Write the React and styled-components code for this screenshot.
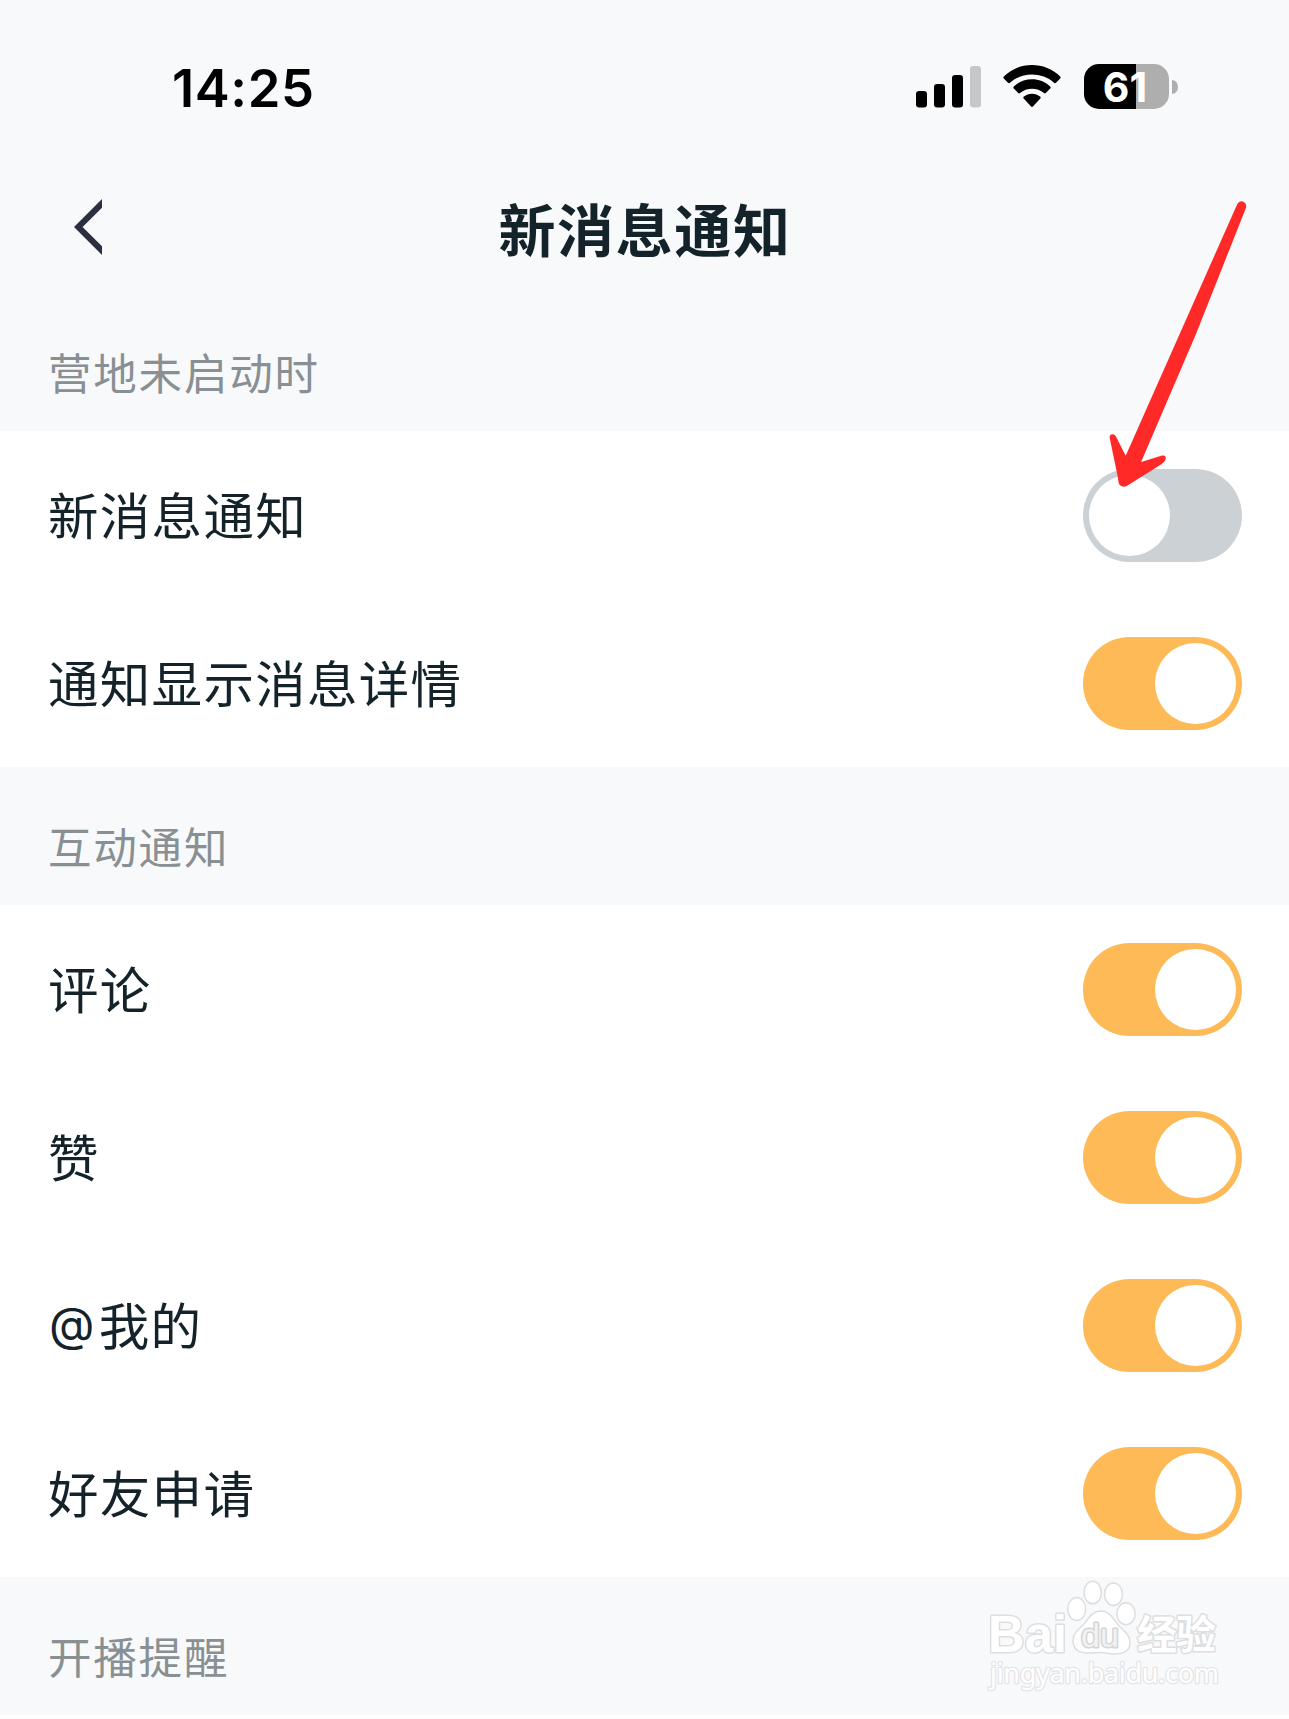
import React, { useState } from "react";
import styled, { createGlobalStyle } from "styled-components";

const sections = [
  {
    title: "营地未启动时",
    items: [
      { label: "新消息通知", on: false },
      { label: "通知显示消息详情", on: true },
    ],
  },
  {
    title: "互动通知",
    items: [
      { label: "评论", on: true },
      { label: "赞", on: true },
      { label: "我的", mention: true, on: true },
      { label: "好友申请", on: true },
    ],
  },
  { title: "开播提醒", items: [] },
];

const Switch = ({ defaultOn }) => {
  const [on, setOn] = useState(defaultOn);
  return (
    <Track type="button" role="switch" aria-checked={on} $on={on} onClick={() => setOn(!on)}>
      <Knob />
    </Track>
  );
};

const SignalIcon = () => (
  <svg width="66" height="42" viewBox="0 0 66 42">
    <rect x="0" y="25" width="11" height="16.5" rx="3.2" />
    <rect x="18" y="18" width="11" height="23.5" rx="3.2" />
    <rect x="36" y="9" width="11" height="32.5" rx="3.2" />
    <rect x="54" y="0" width="11" height="41.5" rx="3.2" fill="#c6c7c9" />
  </svg>
);

const WifiIcon = () => (
  <svg width="58" height="43" viewBox="0 0 58 43">
    <path d="M0.8 11.6 C16 -3.8 42 -3.8 57.2 11.6 Q58 12.5 57.2 13.4 L53 17.7 Q52 18.6 51 17.7 C39 6.9 19 6.9 7 17.7 Q6 18.6 5 17.7 L0.8 13.4 Q0 12.5 0.8 11.6 Z" />
    <path d="M10.8 21.4 C21 12 37 12 47.2 21.4 Q48.1 22.4 47.2 23.4 L42.8 28 Q41.9 28.8 41 28 C34.2 22.3 23.8 22.3 17 28 Q16.1 28.8 15.2 28 L10.8 23.4 Q9.9 22.4 10.8 21.4 Z" />
    <path d="M20.8 31.6 C25.5 27.7 32.5 27.7 37.2 31.6 Q38.2 32.5 37.3 33.5 L29.9 41.5 Q29 42.4 28.1 41.5 L20.7 33.5 Q19.8 32.5 20.8 31.6 Z" />
  </svg>
);

const BackIcon = () => (
  <svg width="28" height="56" viewBox="0 0 28 56">
    <path d="M28 0 L0 28 L28 56 V47.2 L8.6 28 L28 8.8 Z" fill="#2b3040" />
  </svg>
);

const Arrow = () => (
  <ArrowLayer width="140" height="290" viewBox="0 0 140 290">
    <path
      d="M131.3 4 Q133.5 0.5 136.5 1.6 Q141 3.2 140 7.8 L90 134 L35.1 262 L56 255.6 Q61 254.8 59.4 260 Q58.4 262 55 264.5 L21.5 285.5 Q16 288.5 13 284 Q12.2 281 11.8 277 L3.6 237.5 Q3.8 234 6.8 234.2 Q9 234.5 10 236.5 L19.7 255.7 Z"
      fill="#ff2a28"
    />
  </ArrowLayer>
);

const Watermark = () => (
  <WatermarkLayer width="250" height="120" viewBox="980 1575 250 120">
    <g fill="#fff" stroke="#dcdee0" strokeWidth="1.5">
      <ellipse cx="1076.7" cy="1609" rx="9" ry="11.5" />
      <ellipse cx="1092.7" cy="1592.5" rx="8.7" ry="11.3" />
      <ellipse cx="1113.5" cy="1594.3" rx="9" ry="11.3" />
      <ellipse cx="1126" cy="1613.7" rx="9.2" ry="11" />
      <path d="M1101 1611 C1109 1611 1113 1618 1118 1625 C1124 1631 1130 1634 1130 1643 C1130 1651 1123 1654 1116 1654 C1109 1654 1106 1652.5 1101 1652.5 C1095 1652.5 1092 1653.5 1086 1653 C1078 1652.5 1073 1648 1073 1640 C1073 1633 1079 1629 1084 1624 C1089 1618 1092 1611 1101 1611 Z" />
    </g>
    <LogoText x="988" y="1652" fontSize="52" textLength="79" lengthAdjust="spacingAndGlyphs">Bai</LogoText>
    <LogoText x="1081" y="1647" fontSize="33" textLength="38" lengthAdjust="spacingAndGlyphs" $hollow>du</LogoText>
    <LogoText x="1137" y="1649" fontSize="40" textLength="79">经验</LogoText>
    <UrlText x="990" y="1683" textLength="229">jingyan.baidu.com</UrlText>
  </WatermarkLayer>
);

const App = () => {
  return (
    <Screen>
      <GlobalStyle />
      <StatusBar>
        <Time>14:25</Time>
        <StatusIcons>
          <SignalIcon />
          <WifiIcon />
          <Battery>
            <BatteryBody>61</BatteryBody>
            <BatteryTip />
          </Battery>
        </StatusIcons>
      </StatusBar>
      <NavBar>
        <BackButton aria-label="返回">
          <BackIcon />
        </BackButton>
        <Title>新消息通知</Title>
      </NavBar>
      {sections.map((section) => (
        <section key={section.title}>
          <SectionTitle>{section.title}</SectionTitle>
          {section.items.map((item) => (
            <Row key={item.label}>
              <Label>
                {item.mention && <At>@</At>}
                {item.label}
              </Label>
              <Switch defaultOn={item.on} />
            </Row>
          ))}
        </section>
      ))}
      <Arrow />
      <Watermark />
    </Screen>
  );
};

const GlobalStyle = createGlobalStyle`
  * {
    box-sizing: border-box;
  }

  body {
    margin: 0;
    background: #fff;
    font-family: "Noto Sans CJK SC", sans-serif;
  }
`;

const Screen = styled.main`
  position: relative;
  width: 1289px;
  height: 1719px;
  overflow: hidden;
  background: #fff;
`;

const StatusBar = styled.div`
  display: flex;
  justify-content: space-between;
  align-items: center;
  height: 173px;
  padding: 0 111px 0 172px;
  background: #f8f9fb;
`;

const Time = styled.span`
  padding-top: 2px;
  font-family: Inter, sans-serif;
  font-size: 52.5px;
  font-weight: 600;
  line-height: 60px;
  letter-spacing: 0.6px;
  color: #000;
`;

const StatusIcons = styled.div`
  display: flex;
  align-items: center;

  svg:first-child {
    margin-right: 21px;
  }
`;

const Battery = styled.div`
  display: flex;
  align-items: center;
  gap: 3px;
  margin-left: 23px;
`;

const BatteryBody = styled.div`
  width: 85px;
  height: 45px;
  padding-right: 3px;
  border-radius: 15px;
  background: linear-gradient(to right, #000 52px, #aeaeaf 52px);
  color: #fff;
  font-family: Inter, sans-serif;
  font-size: 41px;
  font-weight: 700;
  line-height: 46px;
  text-align: center;
`;

const BatteryTip = styled.div`
  width: 6px;
  height: 14px;
  border-radius: 0 6px 6px 0 / 0 7px 7px 0;
  background: #aeaeaf;
`;

const NavBar = styled.header`
  display: grid;
  grid-template-columns: 28px 1fr 28px;
  align-items: center;
  height: 120px;
  padding: 0 74px 12px;
  background: #f8f9fb;
`;

const BackButton = styled.button`
  padding: 0;
  border: 0;
  background: none;
  line-height: 0;
`;

const Title = styled.h1`
  margin: 0 0 0 1px;
  font-size: 57px;
  font-weight: 700;
  line-height: 84px;
  letter-spacing: 1.6px;
  text-align: center;
  color: #14222a;
`;

const SectionTitle = styled.h2`
  margin: 0;
  height: 138px;
  padding: 48px 48px 0;
  background: #f8f9fb;
  color: #889093;
  font-size: 43.5px;
  font-weight: 400;
  line-height: 62px;
  letter-spacing: 1.8px;
`;

const Row = styled.div`
  display: flex;
  justify-content: space-between;
  align-items: center;
  height: 168px;
  padding: 0 47px 0 48px;
  background: #fff;
`;

const Label = styled.span`
  padding-bottom: 4px;
  font-size: 50.5px;
  line-height: 72px;
  letter-spacing: 1.3px;
  color: #14222a;
`;

const At = styled.span`
  margin: 0 3px 0 1px;
  font-family: Inter, sans-serif;
  font-size: 47px;
  line-height: 1;
  vertical-align: 4px;
`;

const Track = styled.button`
  display: flex;
  justify-content: ${(props) => (props.$on ? "flex-end" : "flex-start")};
  align-items: center;
  width: 159px;
  height: 93px;
  padding: 6px;
  border: 0;
  border-radius: 47px;
  background: ${(props) => (props.$on ? "#fdba57" : "#ccd1d5")};
`;

const Knob = styled.span`
  width: 81px;
  height: 81px;
  border-radius: 50%;
  background: #fff;
`;

const ArrowLayer = styled.svg`
  position: absolute;
  top: 200px;
  left: 1106px;
  overflow: visible;
  pointer-events: none;
`;

const WatermarkLayer = styled.svg`
  position: absolute;
  top: 1575px;
  left: 980px;
  pointer-events: none;
`;

const LogoText = styled.text`
  font-family: "Liberation Sans", "Noto Sans CJK SC", sans-serif;
  font-weight: ${(props) => (props.$hollow ? 400 : 700)};
  fill: ${(props) => (props.$hollow ? "#f1f2f3" : "#fff")};
  stroke: ${(props) => (props.$hollow ? "#d3d5d7" : "#dcdee0")};
  stroke-width: 3px;
  stroke-linejoin: round;
  paint-order: stroke;
`;

const UrlText = styled.text`
  font-family: "Noto Sans", sans-serif;
  font-size: 27px;
  fill: #fff;
  stroke: #e3e5e7;
  stroke-width: 2.5px;
  stroke-linejoin: round;
  paint-order: stroke;
`;

export default App;
